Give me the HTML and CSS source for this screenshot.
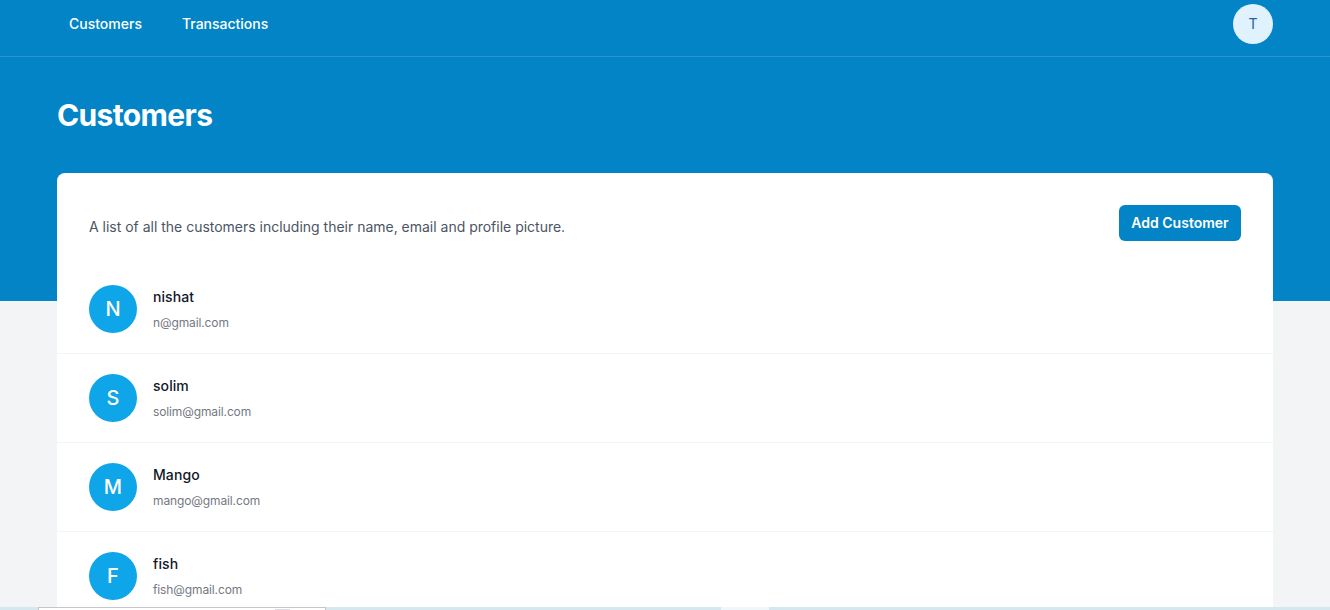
FILE: index.html
```html
<!DOCTYPE html>
<html lang="en">
<head>
<meta charset="utf-8">
<title>Customers</title>
<link rel="stylesheet" href="styles.css">
</head>
<body>
<div class="page">
  <div class="hero">
    <nav class="nav">
      <div class="container nav-inner">
        <div class="nav-links">
          <a class="nav-link">Customers</a>
          <a class="nav-link">Transactions</a>
        </div>
        <div class="user">T</div>
      </div>
    </nav>
    <header class="container heading"><h1 class="title">Customers</h1></header>
  </div>
  <main class="container main">
    <section class="card">
      <div class="card-head">
        <p class="intro">A list of all the customers including their name, email and profile picture.</p>
        <button class="add">Add Customer</button>
      </div>
      <ul class="list">
        <li class="row"><span class="avatar">N</span><div class="details"><p class="name">nishat</p><p class="email">n@gmail.com</p></div></li>
        <li class="row"><span class="avatar">S</span><div class="details"><p class="name">solim</p><p class="email">solim@gmail.com</p></div></li>
        <li class="row"><span class="avatar">M</span><div class="details"><p class="name">Mango</p><p class="email">mango@gmail.com</p></div></li>
        <li class="row"><span class="avatar">F</span><div class="details"><p class="name">fish</p><p class="email">fish@gmail.com</p></div></li>
      </ul>
    </section>
  </main>
  <div class="strip"><span class="strip-field"></span><span class="strip-mark"></span><span class="strip-app"></span></div>
</div>
</body>
</html>
```
FILE: styles.css
```css
* { box-sizing: border-box; margin: 0; padding: 0; }
body { font-family: Inter, "Liberation Sans", sans-serif; background: #f3f4f6; }
.page { position: relative; height: 610px; overflow: hidden; }
.container { width: 1216px; margin: 0 auto; }
.hero { height: 301px; background: #0284c7; }
.nav { height: 57px; border-bottom: 1px solid #2797d2; }
.nav-inner { display: flex; justify-content: space-between; padding-top: 4px; }
.nav-links { display: flex; gap: 16px; padding-top: 2px; }
.nav-link { height: 36px; padding: 8px 12px; color: #fff; font-size: 14px; line-height: 20px; font-weight: 500; }
.user { width: 40px; height: 40px; border-radius: 50%; background: #e0f2fe; color: #2563a0; font-size: 14px; line-height: 40px; text-align: center; }
.heading { padding-top: 40px; }
.title { color: #fff; font-size: 30px; line-height: 36px; font-weight: 700; letter-spacing: -0.63px; }
.main { margin-top: -128px; }
.card { background: #fff; border-radius: 8px; }
.card-head { display: flex; justify-content: space-between; align-items: flex-start; padding: 32px 32px 24px; }
.intro { padding-top: 12px; color: #4b5563; font-size: 14px; line-height: 20px; letter-spacing: -0.01px; }
.add { height: 36px; width: 122px; border: 0; border-radius: 6px; background: #0284c7; color: #fff; font: 600 14px/20px Inter, sans-serif; }
.list { list-style: none; }
.row { display: flex; gap: 16px; height: 89px; padding: 20px 32px; border-bottom: 1px solid #f3f4f6; }
.avatar { width: 48px; height: 48px; border-radius: 50%; background: #0ea5e9; color: #fff; font-size: 20px; line-height: 48px; font-weight: 500; text-align: center; }
.name { font-size: 14px; line-height: 24px; font-weight: 500; letter-spacing: 0.08px; color: #111827; }
.email { margin-top: 4px; font-size: 12px; line-height: 20px; color: #747982; letter-spacing: -0.12px; }
.strip { position: absolute; left: 0; right: 0; bottom: 0; height: 3px; background: #d5e8ef; }
.strip-field { position: absolute; left: 38px; top: 0; width: 288px; height: 3px; background: #fff; border: 1px solid #c4c6c8; border-bottom: 0; }
.strip-mark { position: absolute; left: 275px; top: 2px; width: 15px; height: 1px; background: #dcdde8; }
.strip-app { position: absolute; left: 721px; top: 0; width: 48px; height: 3px; background: #f0f7fa; }
```
